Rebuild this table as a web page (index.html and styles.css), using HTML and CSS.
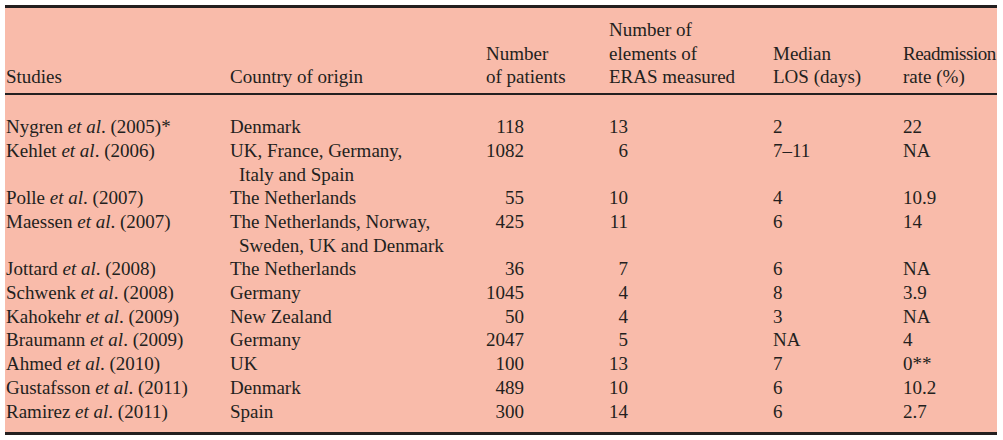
FILE: index.html
```html
<!DOCTYPE html>
<html>
<head>
<meta charset="utf-8">
<link rel="stylesheet" href="styles.css">
</head>
<body>
<table class="eras">
  <colgroup>
    <col class="c-study">
    <col class="c-country">
    <col class="c-pat">
    <col class="c-el">
    <col class="c-los">
    <col class="c-re">
  </colgroup>
  <thead>
    <tr>
      <th class="first">Studies</th>
      <th>Country of origin</th>
      <th>Number<br>of patients</th>
      <th>Number of<br>elements of<br>ERAS measured</th>
      <th>Median<br>LOS (days)</th>
      <th><span class="tight">Readmission</span><br>rate (%)</th>
    </tr>
  </thead>
  <tbody>
    <tr><td class="first">Nygren <i>et al</i>. (2005)*</td><td class="ctry">Denmark</td><td><span class="n4">118</span></td><td><span class="n2">13</span></td><td>2</td><td>22</td></tr>
    <tr><td class="first">Kehlet <i>et al</i>. (2006)</td><td class="ctry">UK, France, Germany,<br>Italy and Spain</td><td><span class="n4">1082</span></td><td><span class="n2">6</span></td><td>7–11</td><td>NA</td></tr>
    <tr><td class="first">Polle <i>et al</i>. (2007)</td><td class="ctry">The Netherlands</td><td><span class="n4">55</span></td><td><span class="n2">10</span></td><td>4</td><td>10.9</td></tr>
    <tr><td class="first">Maessen <i>et al</i>. (2007)</td><td class="ctry">The Netherlands, Norway,<br>Sweden, UK and Denmark</td><td><span class="n4">425</span></td><td><span class="n2">11</span></td><td>6</td><td>14</td></tr>
    <tr><td class="first">Jottard <i>et al</i>. (2008)</td><td class="ctry">The Netherlands</td><td><span class="n4">36</span></td><td><span class="n2">7</span></td><td>6</td><td>NA</td></tr>
    <tr><td class="first">Schwenk <i>et al</i>. (2008)</td><td class="ctry">Germany</td><td><span class="n4">1045</span></td><td><span class="n2">4</span></td><td>8</td><td>3.9</td></tr>
    <tr><td class="first">Kahokehr <i>et al</i>. (2009)</td><td class="ctry">New Zealand</td><td><span class="n4">50</span></td><td><span class="n2">4</span></td><td>3</td><td>NA</td></tr>
    <tr><td class="first">Braumann <i>et al</i>. (2009)</td><td class="ctry">Germany</td><td><span class="n4">2047</span></td><td><span class="n2">5</span></td><td>NA</td><td>4</td></tr>
    <tr><td class="first">Ahmed <i>et al</i>. (2010)</td><td class="ctry">UK</td><td><span class="n4">100</span></td><td><span class="n2">13</span></td><td>7</td><td>0**</td></tr>
    <tr><td class="first">Gustafsson <i>et al</i>. (2011)</td><td class="ctry">Denmark</td><td><span class="n4">489</span></td><td><span class="n2">10</span></td><td>6</td><td>10.2</td></tr>
    <tr class="last"><td class="first">Ramirez <i>et al</i>. (2011)</td><td class="ctry">Spain</td><td><span class="n4">300</span></td><td><span class="n2">14</span></td><td>6</td><td>2.7</td></tr>
  </tbody>
</table>
</body>
</html>
```
FILE: styles.css
```css
html, body {
  margin: 0;
  padding: 0;
  background: #ffffff;
}

.eras {
  margin: 5px 0 0 5px;
  width: 992px;
  table-layout: fixed;
  border-collapse: separate;
  border-spacing: 0;
  background: #f9bbaa;
  border-top: 3px solid #231f20;
  border-bottom: 3px solid #231f20;
  font-family: "Liberation Serif", "Times New Roman", serif;
  font-size: 19px;
  line-height: 23.7px;
  color: #231f20;
}

.c-study { width: 225px; }
.c-country { width: 256px; }
.c-pat { width: 123px; }
.c-el { width: 164px; }
.c-los { width: 130px; }
.c-re { width: 94px; }

.eras th {
  font-weight: normal;
  text-align: left;
  vertical-align: bottom;
  white-space: nowrap;
  padding: 10px 0 4px 0;
  border-bottom: 2px solid #231f20;
}

.eras td {
  text-align: left;
  vertical-align: top;
  white-space: nowrap;
  padding: 0;
}

.eras .first {
  padding-left: 1px;
}

.eras tbody tr:first-child td {
  padding-top: 20px;
}

.eras tr.last td {
  padding-bottom: 9px;
}

.eras td.ctry {
  padding-left: 9px;
  text-indent: -9px;
}

.n4 {
  display: inline-block;
  width: 38px;
  text-align: right;
}

.n2 {
  display: inline-block;
  width: 19px;
  text-align: right;
}

.tight {
  letter-spacing: -0.5px;
}
```
